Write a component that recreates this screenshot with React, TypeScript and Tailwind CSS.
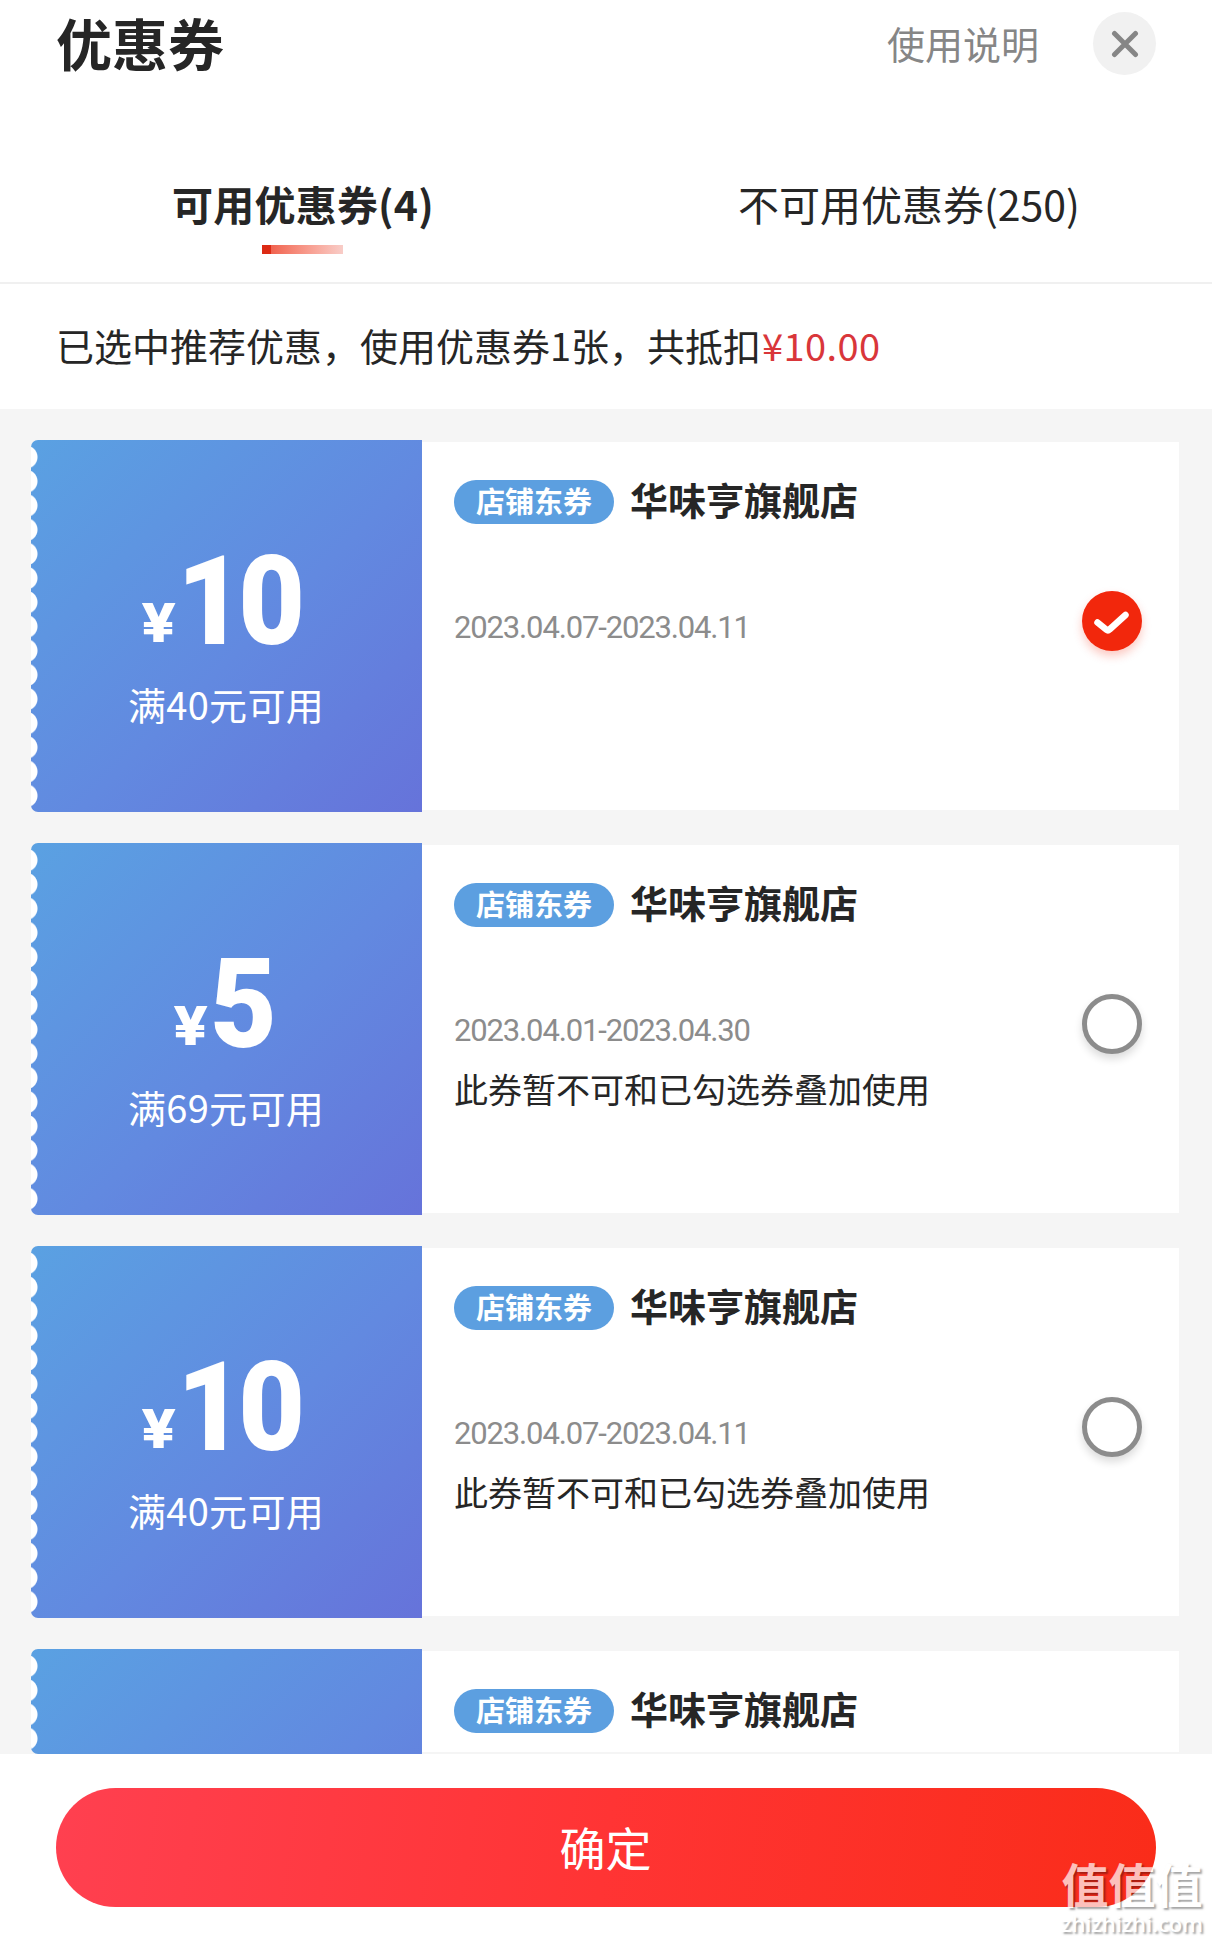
import { useState } from 'react';

type Coupon = {
  id: number;
  store: string;
  amount?: number;
  condition?: string;
  period?: string;
};

const coupons: Coupon[] = [
  {
    id: 1,
    amount: 10,
    condition: '满40元可用',
    store: '华味亨旗舰店',
    period: '2023.04.07-2023.04.11'
  },
  {
    id: 2,
    amount: 5,
    condition: '满69元可用',
    store: '华味亨旗舰店',
    period: '2023.04.01-2023.04.30'
  },
  {
    id: 3,
    amount: 10,
    condition: '满40元可用',
    store: '华味亨旗舰店',
    period: '2023.04.07-2023.04.11'
  },
  {
    id: 4,
    store: '华味亨旗舰店'
  }
];

function Header() {
  return (
    <header className="flex h-[86px] shrink-0 items-center pl-14 pr-[56px]">
      <h1 className="-mt-[3px] text-[56px] font-bold leading-none">优惠券</h1>
      <button className="ml-auto text-[38px] leading-none text-[#868686]">
        使用说明
      </button>
      <button
        aria-label="关闭"
        className="ml-[54px] mt-px flex size-[63px] items-center justify-center rounded-full bg-[#f1f1f1]"
      >
        <svg viewBox="0 0 28 28" className="size-7" fill="none">
          <path
            d="M3.5 3.5L24.5 24.5M24.5 3.5L3.5 24.5"
            stroke="#868686"
            strokeWidth="5"
            strokeLinecap="round"
          />
        </svg>
      </button>
    </header>
  );
}

function Tabs() {
  return (
    <nav className="grid h-[198px] shrink-0 grid-cols-2 border-b-2 border-[#f0f0f0] pt-[87px] text-[41px] leading-[60px]">
      <button className="flex flex-col items-center font-bold tracking-[0.2px]">
        可用优惠券(4)
        <span className="mr-px mt-3 flex h-[9px] w-[81px]">
          <span className="w-[9px] bg-[#dc2a14]" />
          <span className="flex-1 bg-linear-to-r from-[#f0624f] to-[#f8cdc8]" />
        </span>
      </button>
      <button className="flex flex-col items-center">不可用优惠券(250)</button>
    </nav>
  );
}

function Radio({ checked }: { checked: boolean }) {
  if (!checked) {
    return (
      <span className="block size-[60px] rounded-full border-[5px] border-[#8c8c8c] bg-white shadow-[0_5px_8px_rgba(0,0,0,0.14)]" />
    );
  }

  return (
    <span className="flex size-[60px] items-center justify-center rounded-full bg-[#f2270c] shadow-[0_5px_10px_rgba(242,39,12,0.25)]">
      <svg viewBox="0 0 60 60" className="size-[60px]" fill="none">
        <path
          d="M15.5 31.5L24.5 38.8Q26 40 27.5 38.5L43.5 24"
          stroke="white"
          strokeWidth="6.5"
          strokeLinecap="round"
          strokeLinejoin="round"
        />
      </svg>
    </span>
  );
}

function CouponCard({
  coupon,
  selected,
  onSelect
}: {
  coupon: Coupon;
  selected: boolean;
  onSelect: () => void;
}) {
  return (
    <article
      className={
        coupon.period ? 'flex h-[372px] shrink-0' : 'flex h-[105px] shrink-0'
      }
    >
      <div
        className={
          coupon.period
            ? 'relative flex w-[391px] flex-col items-center overflow-hidden rounded-l-[7px] bg-[linear-gradient(135deg,#5aa1e2_0%,#6289e0_55%,#6673da_100%)] pt-[99px] text-white'
            : 'relative w-[391px] overflow-hidden rounded-l-[7px] bg-[linear-gradient(135deg,#5aa1e2_0%,#6289e0_55%,#6673da_100%)] bg-[length:391px_372px]'
        }
      >
        {/* Scalloped edge */}
        <span className="absolute left-0 top-[5px] h-[363px] w-2 bg-[radial-gradient(circle_at_-5px_50%,white_11px,transparent_12px)] bg-[length:8px_24.2px]" />
        {coupon.period && (
          <>
            <div className="mt-px flex h-[124px] items-baseline pr-1">
              <span className="origin-left -translate-y-[2px] scale-x-[1.13] font-[Inter] text-[54px] font-extrabold leading-none">
                ¥
              </span>
              <span className="ml-[5px] origin-left scale-x-[0.93] font-[Roboto] text-[124px] font-black leading-none tracking-[-6px]">
                {coupon.amount}
              </span>
            </div>
            <p className="mt-5 pr-px text-[38px] leading-10 tracking-[0.3px]">
              {coupon.condition}
            </p>
          </>
        )}
      </div>

      <div className="my-[2px] flex flex-1 justify-between bg-white pl-8 pr-[37px]">
        <div className="pt-[38px]">
          <div className="flex h-11 items-center">
            <span className="flex h-11 w-40 items-center justify-center rounded-full bg-[#5c9fe0] pb-[3px] text-[29px] font-bold leading-none text-white">
              店铺东券
            </span>
            <h2 className="-mt-[6px] ml-4 text-[38px] font-bold leading-none">
              {coupon.store}
            </h2>
          </div>
          {coupon.period && (
            <p className="mt-[84px] font-[Roboto] text-[31px] leading-10 tracking-[-1.15px] text-[#8c8c8c]">
              {coupon.period}
            </p>
          )}
          {coupon.period && !selected && (
            <p className="mt-[18px] text-[34px] leading-10">
              此券暂不可和已勾选券叠加使用
            </p>
          )}
        </div>
        {coupon.period && (
          <button
            className="mt-[149px] self-start"
            aria-label="选择优惠券"
            onClick={onSelect}
          >
            <Radio checked={selected} />
          </button>
        )}
      </div>
    </article>
  );
}

export default function App() {
  const [selectedId, setSelectedId] = useState(1);

  return (
    <main className="relative flex h-[1942px] w-[1212px] flex-col overflow-hidden bg-white font-['Noto_Sans_CJK_SC',sans-serif] text-[#262626]">
      <Header />
      <Tabs />

      <p className="flex h-[125px] shrink-0 items-center pb-1 pl-14 text-[38px] leading-none">
        已选中推荐优惠，使用优惠券1张，共抵扣
        <span className="ml-px tracking-[0.4px] text-[#d9363a]">¥10.00</span>
      </p>

      <section className="flex h-[1345px] shrink-0 flex-col gap-[31px] bg-[#f5f5f5] pl-[31px] pr-[33px] pt-[31px]">
        {coupons.map((coupon) => (
          <CouponCard
            key={coupon.id}
            coupon={coupon}
            selected={coupon.id === selectedId}
            onSelect={() => setSelectedId(coupon.id)}
          />
        ))}
      </section>

      <footer className="flex-1 bg-white px-14 pt-[34px]">
        <button className="h-[119px] w-full rounded-full bg-[linear-gradient(98deg,#ff4050_0%,#ff3434_50%,#fa2c19_100%)] pb-1 pr-px text-[46px] leading-none text-white">
          确定
        </button>
      </footer>

      {/* Site watermark */}
      <div className="pointer-events-none absolute bottom-0 right-[9px] flex w-[142px] flex-col items-center text-white opacity-70 [text-shadow:2px_2px_2px_rgba(0,0,0,0.5)]">
        <span className="text-[47px] font-bold leading-[50px]">值值值</span>
        <span className="pb-[3px] font-['Open_Sans'] text-[22px] font-semibold leading-[31px] tracking-[-0.1px]">
          zhizhizhi.com
        </span>
      </div>
    </main>
  );
}
